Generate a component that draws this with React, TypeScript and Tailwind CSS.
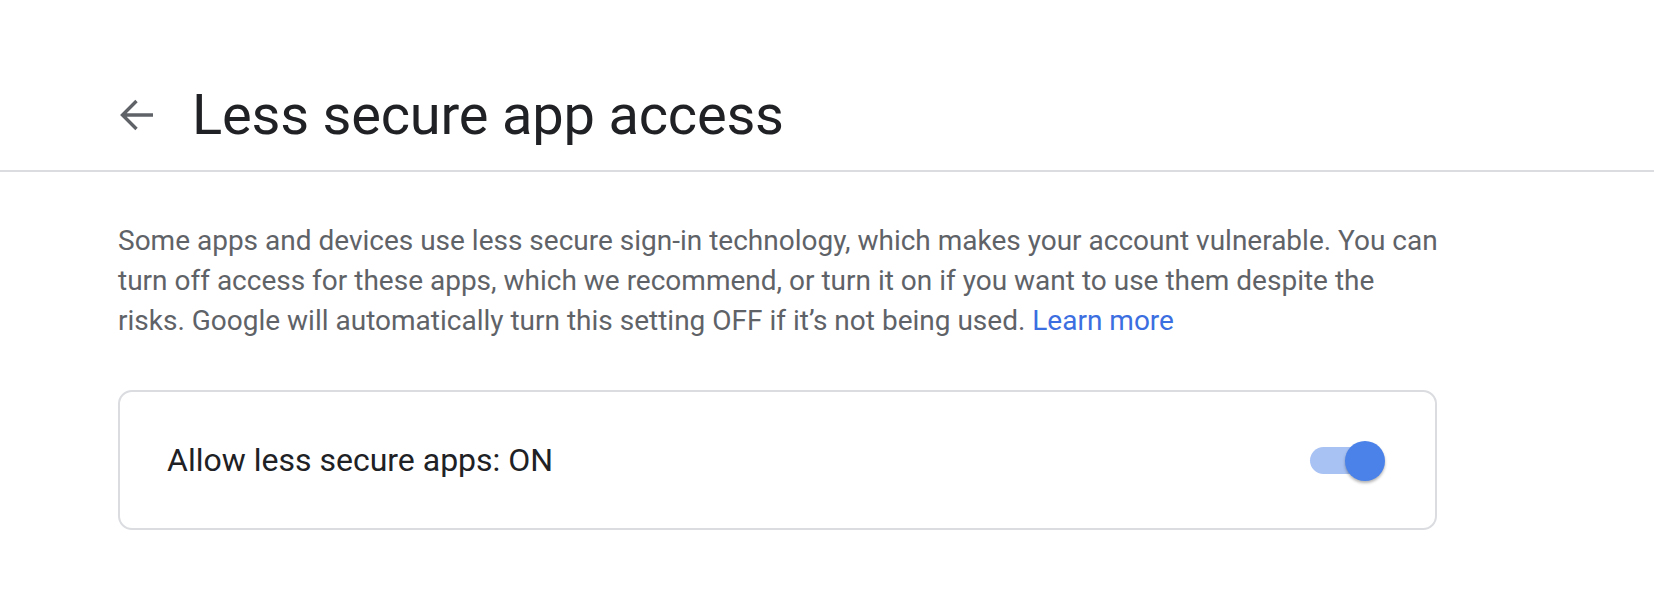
import React from 'react';

const ArrowBack: React.FC = () => (
    <svg viewBox="0 0 34 32" className="w-[34px] h-[32px]" fill="none" stroke="#5f6368" strokeWidth={3.4}>
        <path d="M34 16H3.5M17.5 2L3.5 16l14 14" />
    </svg>
);

export default function App() {
    return (
        <div className="min-h-screen bg-white pt-[60px] font-['Roboto',sans-serif]">
            {/* Header */}
            <div className="h-[112px] flex items-center border-b-2 border-[#dadce0]">
                <div className="ml-[119px] w-[73px] flex items-center">
                    <ArrowBack />
                </div>
                <h1 className="text-[56px] leading-none text-[#202124] tracking-[-0.2px]">
                    Less secure app access
                </h1>
            </div>

            {/* Content */}
            <div className="pl-[118px]">
                <p className="mt-[49px] w-[1330px] text-[28px] leading-[40px] text-[#5f6368]">
                    Some apps and devices use less secure sign-in technology, which makes your account vulnerable. You can turn off access for these apps, which we recommend, or turn it on if you want to use them despite the risks. Google will automatically turn this setting OFF if it’s not being used.{' '}
                    <a className="text-[#3b6ee0]">Learn more</a>
                </p>

                <div className="mt-[49px] w-[1319px] h-[140px] flex items-center justify-between pl-[47px] pr-[50px] border-2 border-[#dadce0] rounded-[14px]">
                    <span className="text-[32px] text-[#202124]">Allow less secure apps: ON</span>
                    <div className="relative w-[75px] h-[40px] flex items-center">
                        <div className="w-[60px] h-[27px] rounded-full bg-[#a8c2f4]" />
                        <div className="absolute right-0 top-[1px] w-[40px] h-[40px] rounded-full bg-[#4a82ea] shadow-[0_2px_3px_rgba(0,0,0,0.3)]" />
                    </div>
                </div>
            </div>
        </div>
    );
}
